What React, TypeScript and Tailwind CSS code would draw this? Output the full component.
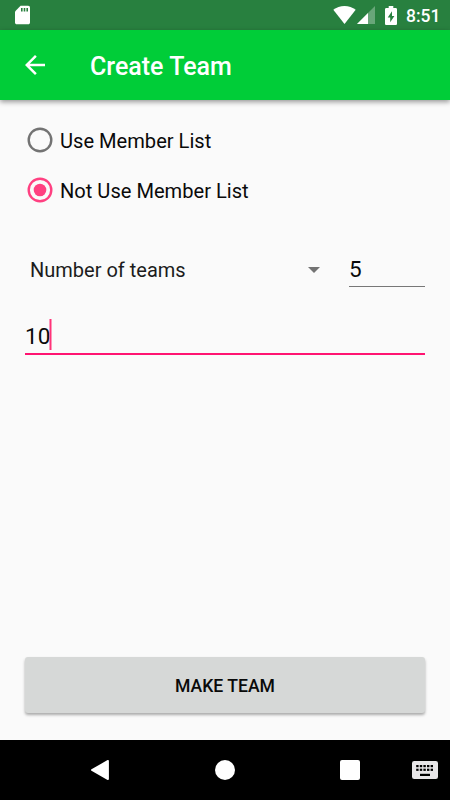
import { useState } from "react";

type Mode = "list" | "none";

const OPTIONS: { value: Mode; label: string }[] = [
  { value: "list", label: "Use Member List" },
  { value: "none", label: "Not Use Member List" },
];

const KEY_COLS = [4.2, 7.8, 11.4, 15, 18.6];

function StatusBar() {
  return (
    <div className="flex h-[30px] items-center bg-[#28803f] text-white">
      <svg className="ml-[15px]" width="15" height="20" viewBox="0 0 15 20">
        <path fill="#fff" d="M5.6 0.8h7.6c1 0 1.8.8 1.8 1.800v14.900c0 1-.8 1.800-1.800 1.800H1.800C.8 19.300 0 18.500 0 17.500V6.400z" />
        <path fill="#28803f" d="M6 3h1.600v3.600H6zM8.700 3h1.600v3.600H8.700zM11.400 3h1.600v3.600h-1.600z" />
      </svg>
      <svg className="ml-auto" width="23" height="18" viewBox="0 0 23 18">
        <path fill="#fff" d="M0.300 3.800C3.400 1.400 7.300 0 11.500 0s8.100 1.400 11.200 3.800L11.500 18z" />
      </svg>
      <svg className="ml-[1px]" width="18" height="18" viewBox="0 0 18 18">
        <path fill="#fff" fillOpacity="0.300" d="M0 18L18 0v18z" />
        <path fill="#fff" d="M0 18L11 7V18z" />
      </svg>
      <svg className="ml-[10px]" width="12" height="19" viewBox="0 0 12 19">
        <path fill="#fff" d="M3.700 0h4.600v2h2.400c.7 0 1.300.6 1.300 1.300v14.400c0 .7-.6 1.300-1.300 1.300H1.300C.6 19 0 18.400 0 17.700V3.300C0 2.600.6 2 1.300 2h2.400z" />
        <path fill="#28803f" d="M7 5.300L2.700 11.500h2.500v4.700L9.400 10H7z" />
      </svg>
      <span className="mr-[10px] ml-[9px] w-[34px] text-[17.5px] leading-[30px] font-medium whitespace-nowrap">
        <span className="relative top-[1px]">8:51</span>
      </span>
    </div>
  );
}

function AppBar() {
  return (
    <header className="relative flex h-[70px] items-center bg-[#00cd38] pl-5 text-white shadow-[0_2px_5px_rgba(0,0,0,0.4)]">
      <button aria-label="Back">
        <svg width="30" height="30" viewBox="0 0 24 24" fill="#fff">
          <path d="M20 11H7.830l5.590-5.590L12 4l-8 8 8 8 1.410-1.410L7.830 13H20z" />
        </svg>
      </button>
      <h1 className="mt-[3px] ml-10 text-[25px] leading-[30px] font-medium">Create Team</h1>
    </header>
  );
}

function Radio({ checked, label, onSelect }: { checked: boolean; label: string; onSelect: () => void }) {
  return (
    <button role="radio" aria-checked={checked} onClick={onSelect} className="flex h-[50px] items-center">
      <svg width="30" height="30" viewBox="0 0 30 30" className={checked ? "text-[#ff4081]" : "text-[#737373]"}>
        <circle cx="15" cy="15" r="11.300" fill="none" stroke="currentColor" strokeWidth="2.400" />
        {checked && <circle cx="15" cy="15" r="6.300" fill="currentColor" />}
      </svg>
      <span className="mt-[2px] ml-[5px] text-[20.1px] leading-[30px]">{label}</span>
    </button>
  );
}

function NavBar() {
  return (
    <nav className="flex h-[60px] items-center bg-black">
      <svg className="ml-[91px]" width="18" height="20" viewBox="0 0 18 20">
        <path fill="#fff" stroke="#fff" strokeWidth="1.800" strokeLinejoin="round" d="M0.900 10L17 0.900v18.200z" />
      </svg>
      <div className="ml-[106px] size-5 rounded-full bg-white" />
      <div className="ml-[105px] size-[20px] rounded-[2px] bg-white" />
      <svg className="ml-[52px]" width="26" height="18" viewBox="0 0 26 18">
        <rect width="26" height="18" rx="2.200" fill="#e8e6e8" />
        {KEY_COLS.map((x) => (
          <g key={x}>
            <rect x={x} y="4" width="2.400" height="2.200" />
            <rect x={x} y="7.700" width="2.400" height="2.200" />
          </g>
        ))}
        <rect x="8" y="12.800" width="10" height="2.200" />
      </svg>
    </nav>
  );
}

export default function App() {
  const [mode, setMode] = useState<Mode>("none");

  return (
    <div className="flex h-[800px] w-[450px] flex-col overflow-hidden bg-[#fafafa] font-['Roboto',sans-serif] text-[#0a0a0a]">
      <StatusBar />
      <AppBar />

      <main className="flex flex-1 flex-col px-[25px] pt-[15px] pb-[27px]">
        <div role="radiogroup" className="flex flex-col items-start">
          {OPTIONS.map((o) => (
            <Radio key={o.value} label={o.label} checked={mode === o.value} onSelect={() => setMode(o.value)} />
          ))}
        </div>

        {/* Split type and count */}
        <div className="mt-[35px] flex h-[37px] items-center">
          <button className="flex flex-1 items-center pt-[3px] pl-[5px]">
            <span className="text-xl leading-[30px] text-[#1c1c1c]">Number of teams</span>
            <svg className="mr-[29px] mb-px ml-auto" width="12" height="6" viewBox="0 0 12 6">
              <path fill="#737373" d="M0 0h12L6 6z" />
            </svg>
          </button>
          <div className="h-[37px] w-[76px] border-b border-[#777] text-[22.5px] leading-[39px]">5</div>
        </div>

        {/* Focused member count field */}
        <div className="mt-8 flex h-[36px] items-start border-b-2 border-[#ff1471]">
          <span className="text-[22.5px] leading-[34px]">10</span>
          <span className="h-[31px] w-[2px] -translate-x-[0.5px] bg-[#ff3378]" />
        </div>

        <button className="mt-auto h-[56px] rounded-[3px] bg-[#d6d8d7] pt-[2px] text-[17.6px] font-medium shadow-[0_2px_3px_rgba(0,0,0,0.32)]">
          MAKE TEAM
        </button>
      </main>

      <NavBar />
    </div>
  );
}
